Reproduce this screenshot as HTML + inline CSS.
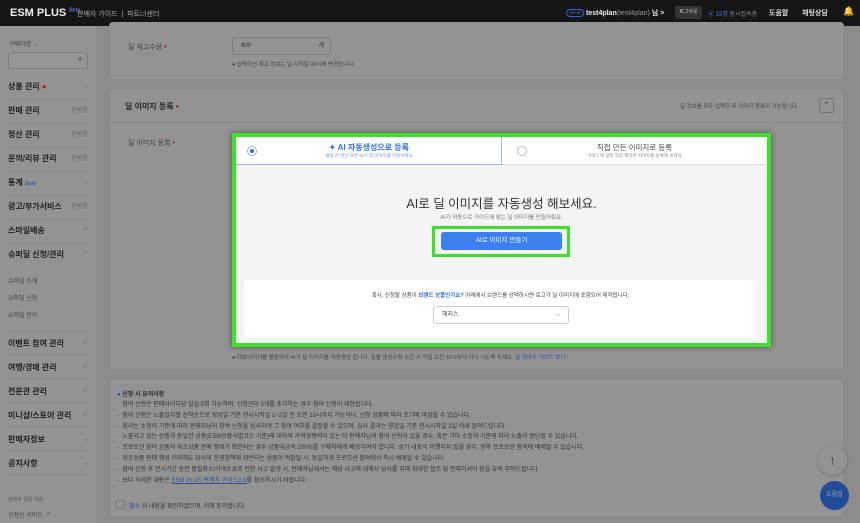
<!DOCTYPE html><html><head><meta charset="utf-8"><style>
*{box-sizing:border-box;margin:0;padding:0}
body{width:860px;height:523px;overflow:hidden;background:#8b8b8b;font-family:"Liberation Sans","Noto Sans CJK KR",sans-serif;color:#2a2a2a;position:relative;font-size:7px}
.abs{position:absolute}
.top{left:0;top:0;width:860px;height:26px;background:#161616;color:#ddd}
.side{left:0;top:26px;width:97px;height:497px;background:#939393;border-right:1px solid #888}
.panel{background:#939393;border:1px solid #8a8a8a;border-radius:4px}
.mi{position:absolute;left:8px;width:80px;font-size:8px;font-weight:bold;color:#222;border-bottom:1px solid #868686;height:24px;line-height:24px}
.mi span.r{position:absolute;right:0;font-size:6px;color:#666;font-weight:normal}
.sub{position:absolute;left:8px;font-size:6px;color:#444}
.red{color:#8b1010}
li{list-style:none;font-size:6px;color:#333;height:10.8px;line-height:10.8px}
</style></head><body>
<div class="abs top">
 <div class="abs" style="left:10px;top:7px;font-size:11px;font-weight:bold;color:#eee">ESM PLUS <sup style="font-size:5px;color:#4f7de0;font-style:italic">Beta</sup></div>
 <div class="abs" style="left:77px;top:9px;font-size:7px;color:#aaa">판매자 가이드 &nbsp;|&nbsp; 파트너센터</div>
 <div class="abs" style="left:566px;top:9px;width:18px;height:8px;border:1px solid #3a63c8;border-radius:4px;font-size:4px;color:#4f7de0;text-align:center;line-height:6px">마스터</div>
 <div class="abs" style="left:586px;top:8px;font-size:7px;color:#eee;font-weight:bold">test4plan<span style="font-weight:normal;color:#999">(test4plan)</span> 님 &gt;</div>
 <div class="abs" style="left:675px;top:6px;width:27px;height:13px;background:#333;border-radius:2px;font-size:5px;color:#ccc;text-align:center;line-height:13px">로그아웃</div>
 <div class="abs" style="left:708px;top:9px;font-size:6px;color:#4f7de0">ⓐ 15명 <span style="color:#888">동시접속중</span></div>
 <div class="abs" style="left:769px;top:8px;font-size:7px;color:#ddd;font-weight:bold">도움말</div>
 <div class="abs" style="left:802px;top:8px;font-size:7px;color:#ddd;font-weight:bold">채팅상담</div>
 <div class="abs" style="left:843px;top:6px;font-size:9px;color:#ddd">🔔</div>
</div>
<div class="abs side">
 <div class="sub" style="top:13px;left:9px">구매자명 ⌵</div>
 <div class="abs" style="left:8px;top:26px;width:80px;height:17px;border:1px solid #7d7d7d;border-radius:3px;background:#959595"><span class="abs" style="right:5px;top:3px;font-size:7px">⌕</span></div>
 <div class="mi" style="top:49px">상품 관리 <span style="color:#b91c1c">●</span><span class="r">⌵</span></div>
 <div class="mi" style="top:73px">판매 관리<span class="r">준비중</span></div>
 <div class="mi" style="top:97px">정산 관리<span class="r">준비중</span></div>
 <div class="mi" style="top:121px">문의/리뷰 관리<span class="r">준비중</span></div>
 <div class="mi" style="top:145px">통계 <i style="color:#3c5ea8;font-size:5px">Beta</i><span class="r">⌵</span></div>
 <div class="mi" style="top:169px">광고/부가서비스<span class="r">준비중</span></div>
 <div class="mi" style="top:193px">스마일배송<span class="r">↗</span></div>
 <div class="mi" style="top:217px;border:none">슈퍼딜 신청/관리<span class="r">⌃</span></div>
 <div class="sub" style="top:250px">슈퍼딜 소개</div>
 <div class="sub" style="top:267px">슈퍼딜 신청</div>
 <div class="sub" style="top:284px">슈퍼딜 관리</div>
 <div class="abs" style="left:8px;top:304px;width:80px;border-top:1px solid #868686"></div>
 <div class="mi" style="top:306px">이벤트 참여 관리<span class="r">↗</span></div>
 <div class="mi" style="top:330px">여행/경매 관리<span class="r">↗</span></div>
 <div class="mi" style="top:354px">전문관 관리<span class="r">↗</span></div>
 <div class="mi" style="top:378px">미니샵/스토어 관리<span class="r">↗</span></div>
 <div class="mi" style="top:402px">판매자정보<span class="r">⌵</span></div>
 <div class="mi" style="top:426px">공지사항<span class="r">⌵</span></div>
 <div class="sub" style="top:470px;font-size:5px;color:#555">판매자 금융 지원</div>
 <div class="sub" style="top:484px">선정산 서비스 ↗</div>
</div>
<div class="abs panel" style="left:109px;top:22px;width:735px;height:58px;border-top:none">
 <div class="abs" style="left:18px;top:20px;font-size:7px;color:#444">딜 재고수량 <span class="red">•</span></div>
 <div class="abs" style="left:122px;top:15px;width:99px;height:18px;border:1px solid #7d7d7d;border-radius:3px;font-size:6px;line-height:16px;padding-left:8px">900<span class="abs" style="right:6px">개</span></div>
 <div class="abs" style="left:122px;top:38px;font-size:5.5px;color:#444">● 입력하신 재고 정보는 딜 시작일 00시에 변경됩니다.</div>
</div>
<div class="abs panel" style="left:109px;top:89px;width:735px;height:281px">
 <div class="abs" style="left:15px;top:11px;font-size:8px;font-weight:bold">딜 이미지 등록 <span class="red">•</span></div>
 <div class="abs" style="left:570px;top:12px;font-size:5.5px;color:#444">딜 정보를 모두 입력한 후 이미지 등록이 가능합니다.</div>
 <div class="abs" style="left:709px;top:8px;width:15px;height:15px;border:1px solid #777;border-radius:2px;text-align:center;font-size:7px;line-height:14px">⌃</div>
 <div class="abs" style="left:0;top:32px;width:733px;border-top:1px solid #888"></div>
 <div class="abs" style="left:18px;top:48px;font-size:7px;color:#444">딜 이미지 등록 <span class="red">•</span></div>
 <div class="abs" style="left:122px;top:263px;font-size:5.5px;color:#444">● 대표이미지를 활용하여 AI가 딜 이미지를 자동생성 합니다. 일별 생성수량 소진 시 익일 오전 10시부터 다시 시도해 주세요. <span style="color:#2c4f9a">딜 이미지 가이드 보기 ›</span></div>
</div>
<div class="abs panel" style="left:109px;top:378px;width:735px;height:140px">
 <div class="abs" style="left:7px;top:10px;font-size:6px;font-weight:bold"><span style="color:#2c4f9a">●</span> 신청 시 유의사항</div>
 <ul class="abs" style="left:7px;top:21px">
 <li>· &nbsp;참여 신청은 판매아이디당 일일 5회 가능하며, 신청건이 5개를 초과하는 경우 참여 신청이 제한됩니다.</li>
 <li>· &nbsp;참여 신청은 노출일자별 선착순으로 영업일 기준 전시시작일 1~2일 전 오전 10시까지 가능하나, 신청 상황에 따라 조기에 마감될 수 있습니다.</li>
 <li>· &nbsp;회사는 소정의 기준에 따라 판매자님의 참여 신청을 심사하여 그 참여 여부를 결정할 수 있으며, 심사 결과는 영업일 기준 전시시작일 3일 이내 알려드립니다.</li>
 <li>· &nbsp;노출되고 있는 상품과 동일한 상품(ESM상품식별코드 기준)에 대하여 가격경쟁력이 있는 타 판매자님의 참여 신청이 있을 경우, 혹은 기타 소정의 기준에 따라 노출이 중단될 수 있습니다.</li>
 <li>· &nbsp;프로모션 참여 상품의 위조상품 판매 행위가 확인되는 경우 상품대금의 200%를 구매자에게 배상하여야 합니다. 상기 내용이 이행되지 않을 경우, 향후 프로모션 참여에 배제될 수 있습니다.</li>
 <li>· &nbsp;위조상품 판매 행위 이외에도 당사의 운영정책에 위반되는 상품이 적발될 시, 동일하게 프로모션 참여에서 즉시 배제될 수 있습니다.</li>
 <li>· &nbsp;참여 신청 후 전시기간 동안 품절취소/가격오류로 인한 사고 발생 시, 판매자님께서는 해당 사고에 대해서 당사를 위해 최대한 협조 및 변제하셔야 함을 유의 부탁드립니다.</li>
 <li>· &nbsp;보다 자세한 내용은 <u style="color:#2c4f9a">ESM PLUS 판매자 가이드2.0</u>를 참조하시기 바랍니다.</li>
 </ul>
 <div class="abs" style="left:6px;top:121px;width:9px;height:9px;border:1px solid #777;border-radius:2px"></div>
 <div class="abs" style="left:19px;top:122px;font-size:6px;color:#333"><span style="color:#2c4f9a">필수</span> 위 내용을 확인하였으며, 이에 동의합니다.</div>
</div>
<div class="abs" style="left:818px;top:446px;width:29px;height:29px;border-radius:50%;background:#939393;box-shadow:0 1px 3px #777;text-align:center;line-height:28px;font-size:12px">↑</div>
<div class="abs" style="left:820px;top:481px;width:29px;height:29px;border-radius:50%;background:#204c98;color:#9ab;text-align:center;line-height:29px;font-size:6px">도움말</div>

<div class="abs" style="left:232px;top:133px;width:539px;height:214px;border:4px solid #3de02a;background:#f4f4f4;box-shadow:0 0 6px #555">
 <div class="abs" style="left:0;top:0;width:531px;height:28px;background:#fff;border-bottom:1px solid #ddd"></div>
 <div class="abs" style="left:0;top:0;width:266px;height:28px;border-right:1px solid #9bb7ee;border-bottom:1px solid #9bb7ee;background:#fff"></div>
 <div class="abs" style="left:11px;top:9px;width:10px;height:10px;border:1px solid #aac;border-radius:50%"><div style="margin:2px;width:4px;height:4px;border-radius:50%;background:#2f6ff0"></div></div>
 <div class="abs" style="left:0;top:5px;width:266px;text-align:center;font-size:8px;font-weight:bold;color:#2f6ff0">✦ AI 자동생성으로 등록</div>
 <div class="abs" style="left:0;top:16px;width:266px;text-align:center;font-size:4.5px;color:#6b95e6">클릭 한 번만 하면 AI가 딜 이미지를 만들어줘요</div>
 <div class="abs" style="left:281px;top:9px;width:10px;height:10px;border:1px solid #bbb;border-radius:50%"></div>
 <div class="abs" style="left:266px;top:5px;width:265px;text-align:center;font-size:7.5px;color:#444">직접 만든 이미지로 등록</div>
 <div class="abs" style="left:266px;top:16px;width:265px;text-align:center;font-size:4.5px;color:#888">가이드에 맞춰 직접 제작한 이미지를 등록해 보세요</div>
 <div class="abs" style="left:0;top:56px;width:531px;text-align:center;font-size:12.5px;color:#333">AI로 딜 이미지를 자동생성 해보세요.</div>
 <div class="abs" style="left:0;top:76px;width:531px;text-align:center;font-size:5.5px;color:#777">AI가 자동으로 가이드에 맞는 딜 이미지를 만들어줘요.</div>
 <div class="abs" style="left:196px;top:89px;width:138px;height:31px;border:3px solid #3de02a"></div>
 <div class="abs" style="left:205px;top:95px;width:121px;height:18px;background:#3b7ff0;border-radius:3px;color:#fff;text-align:center;line-height:18px;font-size:6.5px">AI로 이미지 만들기</div>
 <div class="abs" style="left:8px;top:143px;width:513px;height:58px;background:#fff;border-radius:3px">
  <div class="abs" style="left:0;top:11px;width:513px;text-align:center;font-size:5.5px;color:#444">혹시, 신청할 상품이 <b style="color:#2f6ff0">브랜드 상품인가요?</b> 아래에서 브랜드를 선택하시면 로고가 딜 이미지에 포함되어 제작됩니다.</div>
  <div class="abs" style="left:189px;top:26px;width:136px;height:18px;border:1px solid #ccc;border-radius:3px;font-size:6px;line-height:16px;padding-left:8px;color:#444">헤지스<span class="abs" style="right:8px;color:#777">⌵</span></div>
 </div>
</div>
</body></html>
